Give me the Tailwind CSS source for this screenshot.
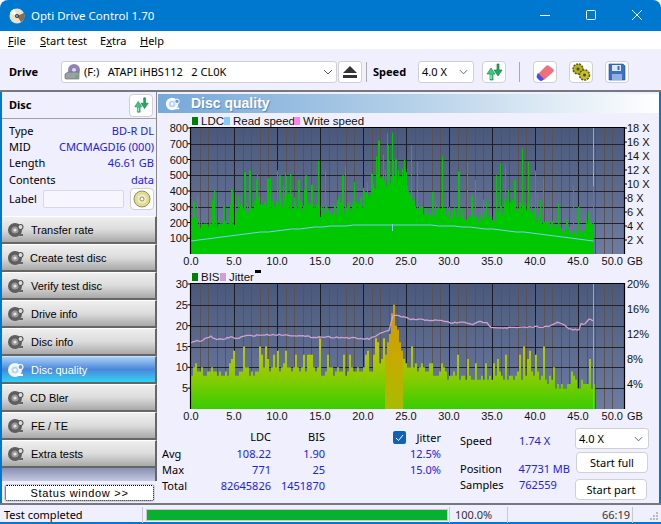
<!DOCTYPE html>
<html>
<head>
<meta charset="utf-8">
<title>Opti Drive Control 1.70</title>
<script src="https://cdn.jsdelivr.net/npm/@tailwindcss/browser@4"></script>
</head>
<body class="m-0 bg-white">

<!-- shared icons -->
<svg width="0" height="0" class="absolute">
  <defs>
    <symbol id="arrows" viewBox="0 0 20 20">
      <path d="M6 18v-6H3l4-6 4 6H9v6z" fill="#3cc880" stroke="#0d7a3e" stroke-width=".6"/>
      <path d="M13 2v6h-3l4 6 4-6h-3V2z" fill="#28a860" stroke="#0d6a36" stroke-width=".6"/>
      <path d="M7 13v4" stroke="#c8f4dc" stroke-width="1"/>
    </symbol>
    <symbol id="navdisc" viewBox="0 0 18 18">
      <circle cx="8" cy="9" r="7" fill="#5e5e5e"/>
      <circle cx="8" cy="9" r="3.600" fill="#999"/>
      <circle cx="8" cy="9" r="1.600" fill="#e4e4e4"/>
      <circle cx="13.500" cy="6" r="2.500" fill="#ddd" stroke="#555" stroke-width="1.100"/>
      <path d="M11 14h5" stroke="#666" stroke-width="2"/>
    </symbol>
    <symbol id="navdiscw" viewBox="0 0 18 18">
      <circle cx="8" cy="9" r="7" fill="#f4f8ff"/>
      <circle cx="8" cy="9" r="3.600" fill="#b8d4f4"/>
      <circle cx="8" cy="9" r="1.600" fill="#fff"/>
      <circle cx="13.500" cy="6" r="2.500" fill="#6a9ed8" stroke="#fff" stroke-width="1.100"/>
      <path d="M11 14h5" stroke="#fff" stroke-width="2"/>
    </symbol>
  </defs>
</svg>

<div class="w-[661px] h-[524px] flex flex-col overflow-hidden bg-[#f0effd] text-black text-[11px] leading-4 [font-family:'Noto_Sans',sans-serif] rounded-t-[8px]">

  <!-- title bar -->
  <div class="h-[31px] shrink-0 bg-[#0078d0] flex items-center text-white">
    <svg class="ml-[9px] w-[16px] h-[16px]" viewBox="0 0 16 16">
      <circle cx="8" cy="8" r="7.500" fill="#e8e2cc"/>
      <path d="M8 8 15 5a7.500 7.500 0 0 1-3 9z" fill="#8a6a50"/>
      <path d="M8 8 1 5a7.500 7.500 0 0 1 4-4z" fill="#fff"/>
      <circle cx="8" cy="8" r="2" fill="#30343c"/>
      <circle cx="8" cy="8" r=".8" fill="#fff"/>
    </svg>
    <span class="ml-[6px] text-[11.5px]">Opti Drive Control 1.70</span>
    <div class="ml-auto flex items-center">
      <svg class="w-[46px] h-[31px]" viewBox="0 0 46 31"><path d="M18 15.500h10" stroke="#fff" stroke-width="1"/></svg>
      <svg class="w-[46px] h-[31px]" viewBox="0 0 46 31"><rect x="18.500" y="10.500" width="9" height="9" rx="1" fill="none" stroke="#fff"/></svg>
      <svg class="w-[46px] h-[31px] mr-[1px]" viewBox="0 0 46 31"><path d="M18 10l10 10M28 10 18 20" stroke="#fff"/></svg>
    </div>
  </div>

  <!-- menu -->
  <div class="h-[18px] shrink-0 bg-white flex items-center pt-[2px] pl-[8px]">
    <span class="w-[32px]"><u>F</u>ile</span>
    <span class="w-[60px]"><u>S</u>tart test</span>
    <span class="w-[40px]">E<u>x</u>tra</span>
    <span><u>H</u>elp</span>
  </div>

  <!-- toolbar -->
  <div class="h-[43px] shrink-0 flex items-center pt-[5px] border-b-2 border-[#77777f]">
    <span class="ml-[9px] font-bold w-[52px]">Drive</span>
    <div class="w-[276px] h-[22px] bg-white border border-[#d0d0d4] rounded-[3px] flex items-center relative">
      <svg class="ml-[2px] w-[17px] h-[18px]" viewBox="0 0 17 18">
        <circle cx="10" cy="7" r="6" fill="#8f82b4"/><circle cx="10" cy="7" r="2" fill="#e0dcf0"/>
        <path d="M1 11 4 9h11v6a1 1 0 0 1-1 1H2a1 1 0 0 1-1-1z" fill="#9aa0a4" stroke="#5c6064" stroke-width=".6"/>
        <rect x="11.500" y="12.500" width="2" height="2" fill="#30c040"/>
      </svg>
      <span class="ml-[3px] whitespace-pre">(F:)   ATAPI iHBS112   2 CL0K</span>
      <svg class="absolute right-[3px] top-[7px] w-[10px] h-[6px]" viewBox="0 0 10 6"><path d="M1 1l4 4 4-4" fill="none" stroke="#555"/></svg>
    </div>
    <button class="ml-[1px] w-[24px] h-[22px] bg-white border border-[#d0d0d4] rounded-[3px] flex items-center justify-center">
      <svg class="w-[16px] h-[14px]" viewBox="0 0 16 14"><path d="M8 1l7 7H1z" fill="#333"/><rect x="1" y="10" width="14" height="3" fill="#333"/></svg>
    </button>
    <div class="ml-[4px] w-px h-[20px] bg-[#aaa]"></div>
    <span class="ml-[6px] font-bold w-[45px]">Speed</span>
    <div class="w-[56px] h-[22px] bg-white border border-[#d0d0d4] rounded-[3px] flex items-center justify-between pl-[3px] pr-[5px]">
      <span>4.0 X</span>
      <svg class="w-[9px] h-[6px]" viewBox="0 0 10 6"><path d="M1 1l4 4 4-4" fill="none" stroke="#555"/></svg>
    </div>
    <button class="ml-[8px] w-[24px] h-[22px] bg-white border border-[#d0d0d4] rounded-[4px] flex items-center justify-center">
      <svg class="w-[20px] h-[20px]"><use href="#arrows"/></svg>
    </button>
    <div class="ml-[13px] w-px h-[20px] bg-[#aaa]"></div>
    <button class="ml-[13px] w-[24px] h-[22px] bg-white border border-[#d0d0d4] rounded-[4px] flex items-center justify-center">
      <svg class="w-[20px] h-[20px]" viewBox="0 0 20 20"><path d="M2 13 11 4a2 2 0 0 1 3 0l4 3a2 2 0 0 1 0 3l-9 8z" fill="#f0707a"/><path d="M2 13a3 3 0 0 0 0 3l2 2a3 3 0 0 0 4 0l1-1-6-6z" fill="#4a50e0"/></svg>
    </button>
    <button class="ml-[12px] w-[24px] h-[22px] bg-white border border-[#d0d0d4] rounded-[4px] flex items-center justify-center">
      <svg class="w-[20px] h-[20px]" viewBox="0 0 20 20"><circle cx="7" cy="7" r="5" fill="#b4b020" stroke="#5a5a10" stroke-width="1.500" stroke-dasharray="2 1"/><circle cx="13.500" cy="13" r="5" fill="#c8c028" stroke="#5a5a10" stroke-width="1.500" stroke-dasharray="2 1"/><circle cx="7" cy="7" r="1.500" fill="#444"/><circle cx="13.500" cy="13" r="1.500" fill="#444"/></svg>
    </button>
    <button class="ml-[12px] w-[24px] h-[22px] bg-white border border-[#d0d0d4] rounded-[4px] flex items-center justify-center">
      <svg class="w-[18px] h-[18px]" viewBox="0 0 18 18"><path d="M1 1h14l2 2v14H1z" fill="#3a70c8" stroke="#244a90" stroke-width=".6"/><rect x="4" y="2" width="9" height="6" fill="#dfe8f4"/><rect x="9.500" y="3" width="2" height="4" fill="#3a70c8"/><rect x="4" y="11" width="10" height="6" fill="#8fb0e0"/></svg>
    </button>
  </div>

  <!-- main -->
  <div class="flex-1 min-h-0 flex border-l-2 border-r-2 border-[#0078d0]">

    <!-- left column -->
    <div class="w-[155px] shrink-0 flex flex-col">
      <div class="h-[124px] shrink-0 flex flex-col border-r border-[#888]">
        <div class="h-[27px] shrink-0 flex items-center justify-between pl-[7px] pr-[3px] border-b border-[#a0a0a8]">
          <span class="font-bold">Disc</span>
          <button class="w-[24px] h-[23px] bg-white border border-[#d0d0d4] rounded-[4px] flex items-center justify-center">
            <svg class="w-[18px] h-[18px]"><use href="#arrows"/></svg>
          </button>
        </div>
        <div class="flex flex-col pl-[7px] pr-[2px] pt-[4px] whitespace-nowrap">
          <div class="h-[16px] flex justify-between"><span>Type</span><span class="text-[#2222dd]">BD-R DL</span></div>
          <div class="h-[16px] flex justify-between"><span>MID</span><span class="text-[#2222dd]">CMCMAGDI6 (000)</span></div>
          <div class="h-[17px] flex justify-between"><span>Length</span><span class="text-[#2222dd]">46.61 GB</span></div>
          <div class="h-[16px] flex justify-between"><span>Contents</span><span class="text-[#2222dd]">data</span></div>
        </div>
        <div class="flex items-center pl-[7px]">
          <span class="w-[34px]">Label</span>
          <div class="w-[81px] h-[18px] bg-[#f7f6fe] border border-[#d8d8e0] rounded-[2px]"></div>
          <button class="ml-[6px] w-[24px] h-[22px] bg-white border border-[#d0d0d4] rounded-[4px] flex items-center justify-center">
            <svg class="w-[18px] h-[18px]" viewBox="0 0 18 18"><circle cx="9" cy="9" r="8" fill="#e0dc90" stroke="#777750" stroke-width=".8"/><circle cx="9" cy="9" r="4.500" fill="#f0eec0"/><circle cx="9" cy="9" r="2" fill="#fff" stroke="#777750" stroke-width=".8"/></svg>
          </button>
        </div>
      </div>

      <div class="flex flex-col [font-family:'Liberation_Sans',sans-serif]">
        <button class="h-[28px] flex items-center pl-[5px] border-t border-white border-b-2 border-b-[#666] border-r-2 border-r-[#666] bg-linear-to-b from-[#efefef] via-[#dcdcdc] to-[#a9a9a9] text-left"><svg class="w-[18px] h-[18px]"><use href="#navdisc"/></svg><span class="ml-[6px]">Transfer rate</span></button>
        <button class="h-[28px] flex items-center pl-[5px] border-t border-white border-b-2 border-b-[#666] border-r-2 border-r-[#666] bg-linear-to-b from-[#efefef] via-[#dcdcdc] to-[#a9a9a9] text-left"><svg class="w-[18px] h-[18px]"><use href="#navdisc"/></svg><span class="ml-[5px]">Create test disc</span></button>
        <button class="h-[28px] flex items-center pl-[5px] border-t border-white border-b-2 border-b-[#666] border-r-2 border-r-[#666] bg-linear-to-b from-[#efefef] via-[#dcdcdc] to-[#a9a9a9] text-left"><svg class="w-[18px] h-[18px]"><use href="#navdisc"/></svg><span class="ml-[6px]">Verify test disc</span></button>
        <button class="h-[28px] flex items-center pl-[5px] border-t border-white border-b-2 border-b-[#666] border-r-2 border-r-[#666] bg-linear-to-b from-[#efefef] via-[#dcdcdc] to-[#a9a9a9] text-left"><svg class="w-[18px] h-[18px]"><use href="#navdisc"/></svg><span class="ml-[6px]">Drive info</span></button>
        <button class="h-[28px] flex items-center pl-[5px] border-t border-white border-b-2 border-b-[#666] border-r-2 border-r-[#666] bg-linear-to-b from-[#efefef] via-[#dcdcdc] to-[#a9a9a9] text-left"><svg class="w-[18px] h-[18px]"><use href="#navdisc"/></svg><span class="ml-[6px]">Disc info</span></button>
        <button class="h-[28px] flex items-center pl-[5px] border-t border-[#c8e0fa] border-b-2 border-b-[#666] border-r-2 border-r-[#666] bg-linear-to-b from-[#a8d0f8] via-[#4a86da] to-[#2cd4f4] text-left text-white"><svg class="w-[18px] h-[18px]"><use href="#navdiscw"/></svg><span class="ml-[6px]">Disc quality</span></button>
        <button class="h-[28px] flex items-center pl-[5px] border-t border-white border-b-2 border-b-[#666] border-r-2 border-r-[#666] bg-linear-to-b from-[#efefef] via-[#dcdcdc] to-[#a9a9a9] text-left"><svg class="w-[18px] h-[18px]"><use href="#navdisc"/></svg><span class="ml-[5px]">CD Bler</span></button>
        <button class="h-[28px] flex items-center pl-[5px] border-t border-white border-b-2 border-b-[#666] border-r-2 border-r-[#666] bg-linear-to-b from-[#efefef] via-[#dcdcdc] to-[#a9a9a9] text-left"><svg class="w-[18px] h-[18px]"><use href="#navdisc"/></svg><span class="ml-[6px]">FE / TE</span></button>
        <button class="h-[28px] flex items-center pl-[5px] border-t border-white border-b-2 border-b-[#666] border-r-2 border-r-[#666] bg-linear-to-b from-[#efefef] via-[#dcdcdc] to-[#a9a9a9] text-left"><svg class="w-[18px] h-[18px]"><use href="#navdisc"/></svg><span class="ml-[6px]">Extra tests</span></button>
      </div>
      <div class="h-[13px] shrink-0 bg-linear-to-b from-[#8890b4] to-[#c4c8e0] border-r-2 border-[#666]"></div>
      <div class="h-[3px] shrink-0"></div>
      <button class="mx-[2px] h-[18px] shrink-0 bg-white rounded-[3px] border border-[#d0d0e0] outline outline-1 -outline-offset-2 outline-dotted outline-black flex items-center justify-center tracking-[0.7px] [font-family:'Liberation_Sans',sans-serif]">Status window &gt;&gt;</button>
    </div>

    <!-- right column -->
    <div class="flex-1 min-w-0 flex flex-col ml-[1px]">
      <div class="h-[19px] mt-[2px] shrink-0 flex items-center bg-linear-to-r from-[#76a8d8] via-[#b4d0e8] to-white text-white">
        <svg class="ml-[7px] w-[16px] h-[16px]"><use href="#navdiscw"/></svg>
        <span class="ml-[10px] mt-[-1px] text-[14px] font-bold [text-shadow:1px_1px_1px_#5588b8] [font-family:'Liberation_Sans',sans-serif]">Disc quality</span>
      </div>
      <svg id="chart" class="block shrink-0 [font-family:'Liberation_Sans',sans-serif]" width="502" height="321" viewBox="157 113 502 321"></svg>

      <!-- stats -->
      <div class="flex-1 relative flex">
        <div class="grid grid-cols-[37px_72px_54px] auto-rows-[16px] items-center mt-[-4px] ml-[4px] h-fit">
          <span></span><span class="text-right mt-[-3px]">LDC</span><span class="text-right mt-[-3px]">BIS</span>
          <span>Avg</span><span class="text-right text-[#2222dd]">108.22</span><span class="text-right text-[#2222dd]">1.90</span>
          <span>Max</span><span class="text-right text-[#2222dd]">771</span><span class="text-right text-[#2222dd]">25</span>
          <span>Total</span><span class="text-right text-[#2222dd]">82645826</span><span class="text-right text-[#2222dd]">1451870</span>
        </div>
        <div class="w-[48px] ml-[68px] h-fit mt-[-4px] flex flex-col items-end">
          <div class="h-[16px] w-full flex items-center justify-between">
            <span class="w-[13px] h-[13px] mt-[-2px] bg-[#0f62b8] rounded-[2px] flex items-center justify-center">
              <svg class="w-[9px] h-[9px]" viewBox="0 0 9 9"><path d="M1 5l2.500 2.500L8 2" fill="none" stroke="#fff"/></svg>
            </span>
            <span>Jitter</span>
          </div>
          <span class="h-[16px] text-[#2222dd]">12.5%</span>
          <span class="h-[16px] text-[#2222dd]">15.0%</span>
        </div>
        <div class="ml-[19px] mt-[-4px] w-[110px] whitespace-nowrap flex flex-col">
          <div class="h-[16px] mt-[3px] flex"><span class="w-[59px]">Speed</span><span class="text-[#2222dd]">1.74 X</span></div>
          <div class="h-[16px] mt-[12px] flex"><span class="w-[59px]">Position</span><span class="text-[#2222dd]">47731 MB</span></div>
          <div class="h-[16px] flex"><span class="w-[59px]">Samples</span><span class="text-[#2222dd]">762559</span></div>
        </div>
        <div class="absolute left-[417px] top-[-6px] w-[74px] flex flex-col">
          <div class="h-[21px] bg-white border border-[#d0d0d4] rounded-[3px] flex items-center justify-between pl-[3px] pr-[5px]">
            <span>4.0 X</span>
            <svg class="w-[9px] h-[6px]" viewBox="0 0 10 6"><path d="M1 1l4 4 4-4" fill="none" stroke="#555"/></svg>
          </div>
          <button class="mt-[3px] h-[21px] w-[72px] ml-[1px] bg-white border border-[#d0d0d4] rounded-[4px]">Start full</button>
          <button class="mt-[6px] h-[21px] w-[72px] bg-white border border-[#d0d0d4] rounded-[4px]">Start part</button>
        </div>
      </div>
    </div>
  </div>

  <!-- status bar -->
  <div class="h-[21px] shrink-0 flex items-center border-t-2 border-[#77777f] border-b-2 border-b-[#0078d0] pl-[4px] pt-[2px] bg-[#f0effd] relative">
    <span class="w-[138px]">Test completed</span>
    <div class="w-px h-[16px] bg-[#c8c8d0]"></div>
    <div class="ml-[3px] w-[302px] h-[12px] bg-[#08b030] border border-[#c8c8c8]"></div>
    <div class="ml-[1px] w-px h-[16px] bg-[#c8c8d0]"></div>
    <span class="ml-[5px] w-[52px] text-[#333]">100.0%</span>
    <div class="w-px h-[16px] bg-[#c8c8d0]"></div>
    <span class="w-[122px] text-right text-[#333]">66:19</span>
    <div class="ml-[2px] w-px h-[16px] bg-[#c8c8d0]"></div>
    <svg class="ml-auto mr-[2px] mt-[4px] w-[11px] h-[11px]" viewBox="0 0 11 11"><path d="M8 1h2v2H8zM5 4h2v2H5zM8 4h2v2H8zM2 7h2v2H2zM5 7h2v2H5zM8 7h2v2H8z" fill="#bbb"/></svg>
  </div>
</div>

<script>
// fake the two graphs from values read off the screen
var svg = document.getElementById('chart');
var NS = 'http://www.w3.org/2000/svg';
function el(name, attrs, txt, parent) {
  var e = document.createElementNS(NS, name);
  for (var k in attrs) e.setAttribute(k, attrs[k]);
  if (txt != null) e.textContent = txt;
  (parent || svg).appendChild(e);
  return e;
}
var seed = 7;
function rnd() { seed = (seed * 16807) % 2147483647; return seed / 2147483647; }
function interp(pts, x) {
  for (var i = 1; i < pts.length; i++) {
    if (x <= pts[i][0]) {
      var a = pts[i-1], b = pts[i];
      return a[1] + (b[1]-a[1]) * (x-a[0]) / (b[0]-a[0]);
    }
  }
  return pts[pts.length-1][1];
}
var X0 = 190, PX = 8.6, XR = 623;
function gx(g) { return X0 + g * PX; }

var defs = el('defs', {});
var bg = el('linearGradient', {id:'plotbg', x1:0, y1:0, x2:0, y2:1}, null, defs);
el('stop', {offset:0, 'stop-color':'#4a597b'}, null, bg);
el('stop', {offset:1, 'stop-color':'#6e7ca2'}, null, bg);
var bis = el('linearGradient', {id:'bisfill', gradientUnits:'userSpaceOnUse', x1:0, y1:409, x2:0, y2:346}, null, defs);
el('stop', {offset:0, 'stop-color':'#38cc00'}, null, bis);
el('stop', {offset:.5, 'stop-color':'#88cc00'}, null, bis);
el('stop', {offset:1, 'stop-color':'#c4c400'}, null, bis);
var peak = el('linearGradient', {id:'bispeak', gradientUnits:'userSpaceOnUse', x1:0, y1:409, x2:0, y2:320}, null, defs);
el('stop', {offset:0, 'stop-color':'#a8bc00'}, null, peak);
el('stop', {offset:.5, 'stop-color':'#c4ac00'}, null, peak);
el('stop', {offset:1, 'stop-color':'#d09c00'}, null, peak);

function frame(top, bottom, hlines) {
  el('rect', {x:X0-1, y:top, width:XR-X0+1, height:bottom-top, fill:'url(#plotbg)'});
  for (var i = 1; i < 50; i++) {
    if (i % 5) el('path', {d:'M'+(Math.round(gx(i))+.5)+' '+top+'V'+bottom, stroke:'#5c5252', 'stroke-width':1});
  }
  hlines.forEach(function (y) { el('path', {d:'M'+X0+' '+(Math.round(y)+.5)+'H'+XR, stroke:'#22222a', 'stroke-width':1}); });
  for (var j = 5; j < 50; j += 5) el('path', {d:'M'+(Math.round(gx(j))+.5)+' '+top+'V'+bottom, stroke:'#1c1c24', 'stroke-width':1});
}
function axisBox(top, bottom) {
  el('path', {d:'M'+(X0-.5)+' '+bottom+'V'+(top-.5)+'H'+(XR+.5)+'V'+bottom, fill:'none', stroke:'#000', 'stroke-width':1.200});
  for (var g = 0; g <= 45; g += 5) {
    el('text', {x:gx(g), y:bottom+11, 'text-anchor':'middle', 'font-size':11, fill:'#111'}, g.toFixed(1));
  }
  el('text', {x:622, y:bottom+11, 'text-anchor':'end', 'font-size':11, fill:'#111'}, '50.0');
  el('text', {x:626, y:bottom+11, 'font-size':11, fill:'#111'}, 'GB');
}
function legend(x, y, items) {
  items.forEach(function (it) {
    el('rect', {x:x, y:y-8, width:6, height:8, fill:it[1]});
    el('text', {x:x+9, y:y, 'font-size':11.500, fill:'#111'}, it[0]);
    x += it[2];
  });
}

// LDC
var T1 = 128, B1 = 254, V1 = 126/800;
legend(191, 125, [['LDC','#008000',32],['Read speed','#80ccff',70],['Write speed','#ff80f0',70]]);
frame(T1, B1, [100,200,300,400,500,600,700].map(function (v) { return B1 - v*V1; }));
for (var v = 100; v <= 800; v += 100) {
  el('text', {x:187, y:B1 - v*V1 + 4, 'text-anchor':'end', 'font-size':11, fill:'#111'}, v);
  el('path', {d:'M186.500 '+(B1-v*V1)+'h3', stroke:'#000'});
}
for (var s = 2; s <= 18; s += 2) {
  var sy = 240 - (s-2)*7;
  el('text', {x:626, y:sy+4, 'font-size':11, fill:'#111'}, s+' X');
  el('path', {d:'M623 '+sy+'h3', stroke:'#000'});
}
var baseL = [[0,260],[.5,230],[1,170],[3,200],[5,215],[6,320],[10,345],[13,310],[15,280],[18,300],[20,340],[22,480],[23.5,570],[25,370],[27,290],[30,270],[33,250],[35,230],[37,320],[38.5,320],[40,250],[43,165],[45,145],[46.8,230]];
var spikesL = [[.3,330],[.7,370],[2.5,340],[2.7,400],[3.8,300],[4.7,410],[5.5,370],[5.8,370],[6.2,520],[6.8,530],[7.7,410],[8.9,480],[10,530],[10.3,500],[10.9,520],[11.5,510],[12.5,470],[13.3,500],[14,440],[14.8,590],[15.6,530],[17.6,500],[17.9,560],[20.5,450],[21,510],[21.5,620],[21.8,720],[22.3,630],[22.9,690],[23.4,770],[23.8,600],[24.5,540],[25,520],[25.6,690],[26.3,585],[28.1,395],[29.2,620],[31.1,525],[32.1,585],[32.6,370],[33,470],[34.3,335],[35.5,500],[35.9,575],[36.5,565],[37.6,470],[38.5,670],[39.2,585],[40,530],[40.9,480],[42.7,320],[44.4,435],[45,300],[46.2,265],[46.8,430]];
var d = '';
for (var px = 190; px <= 592; px++) {
  var g = (px - 190) / PX;
  var h = interp(baseL, g) * (.82 + rnd() * .3);
  if (rnd() < .2) h *= 1 + rnd() * .45;
  spikesL.forEach(function (p) { if (Math.abs(p[0]-g) < .08) h = Math.max(h, p[1]); });
  d += 'M'+(px+.5)+' '+B1+'V'+(B1 - h*V1).toFixed(1);
}
el('path', {d:'M592.500 '+T1+'V'+B1, stroke:'#28d4ff', 'stroke-width':1});
el('path', {d:d, stroke:'#00c800', 'stroke-width':1});
var speed = '';
for (var q = 0; q <= 46.8; q += .9) {
  var yy = Math.round(241 - 16.5 * Math.sin(Math.PI * q / 46.8));
  speed += (q ? 'L' : 'M') + gx(q).toFixed(1) + ' ' + yy;
}
el('path', {d:speed, fill:'none', stroke:'#80c8ff', 'stroke-width':1});
el('path', {d:'M391.500 224v7', stroke:'#80c8ff'});
axisBox(T1, B1);

// BIS + jitter
var T2 = 284, B2 = 409, V2 = 125/30;
legend(191, 281, [['BIS','#008000',28],['Jitter','#d0a0d0',40]]);
el('rect', {x:254, y:270, width:6, height:3, fill:'#000'});
frame(T2, B2, [5,10,15,20,25].map(function (v) { return B2 - v*V2; }));
for (var w = 5; w <= 30; w += 5) {
  el('text', {x:187, y:B2 - w*V2 + 4, 'text-anchor':'end', 'font-size':11, fill:'#111'}, w);
  el('path', {d:'M186.500 '+(B2-w*V2)+'h3', stroke:'#000'});
}
[20,16,12,8,4].forEach(function (p, i) { el('text', {x:626, y:288+i*25, 'font-size':11, fill:'#111'}, p+'%'); });
var baseB = [[0,8],[6,9],[10,9.500],[15,9],[20,9],[22,10.500],[22.500,13],[23,17],[23.500,22],[24,18],[24.500,13],[25,10],[30,8],[33,7],[37,8],[40,8],[43,5.500],[46.8,6.500]];
var spikesB = [[.5,11],[6,15],[7.9,15],[8.7,15],[10,14],[11,14],[12,13],[13.6,13],[14.8,17],[15.8,13],[17.7,13],[20.5,14],[21.3,17],[21.7,16],[22.3,17],[22.9,16],[23.2,18],[23.4,25],[23.6,22],[24,19],[24.5,14],[25.6,15],[28,11],[29.2,10],[31,13],[32,12],[33,11],[35.5,12],[36.5,13],[38.5,15],[39.2,14],[40,13],[40.9,15],[42,10],[44.4,8],[46.3,12]];
var dB = '', dO = '';
for (var pxb = 190; pxb <= 592; pxb += 2) {
  var gb = (pxb - 190) / PX;
  var hb = Math.round(interp(baseB, gb) + rnd() * 2 - 1);
  if (rnd() < .2) hb += 1 + Math.floor(rnd() * 4);
  spikesB.forEach(function (p) { if (Math.abs(p[0]-gb) < .12) hb = Math.max(hb, p[1]); });
  var seg = 'M'+(pxb+1)+' '+B2+'V'+(B2 - hb*V2).toFixed(1);
  if (gb > 22.5 && gb < 24.6) dO += seg; else dB += seg;
}
el('path', {d:dB, stroke:'url(#bisfill)', 'stroke-width':2});
el('path', {d:dO, stroke:'url(#bispeak)', 'stroke-width':2});
el('path', {d:'M592.500 '+T2+'V'+B2, stroke:'#28d4ff', 'stroke-width':1});
var jl = [[0,232],[10,228],[30,228],[60,213],[75,225],[100,222],[120,215],[135,222],[160,213],[210,210],[260,209],[310,211],[360,216],[410,216],[460,218],[510,221],[535,222],[560,210],[595,195],[605,152],[620,152],[660,163],[710,165],[760,168],[780,174],[815,172],[850,178],[865,170],[885,172],[900,185],[920,188],[990,188],[1030,185],[1075,185],[1098,172],[1125,182],[1135,193],[1165,195],[1170,178],[1185,175],[1195,160],[1207,170]];
var jd = '';
for (var jx = 0; jx <= 1207; jx += 6) {
  var jy = interp(jl, jx) / 3 + 265 + (rnd() - .5) * 1.400;
  jd += (jx ? 'L' : 'M') + (190 + jx/3).toFixed(1) + ' ' + jy.toFixed(1);
}
el('path', {d:jd, fill:'none', stroke:'#d0a0d0', 'stroke-width':1.300});
axisBox(T2, B2);
</script>
</body>
</html>
